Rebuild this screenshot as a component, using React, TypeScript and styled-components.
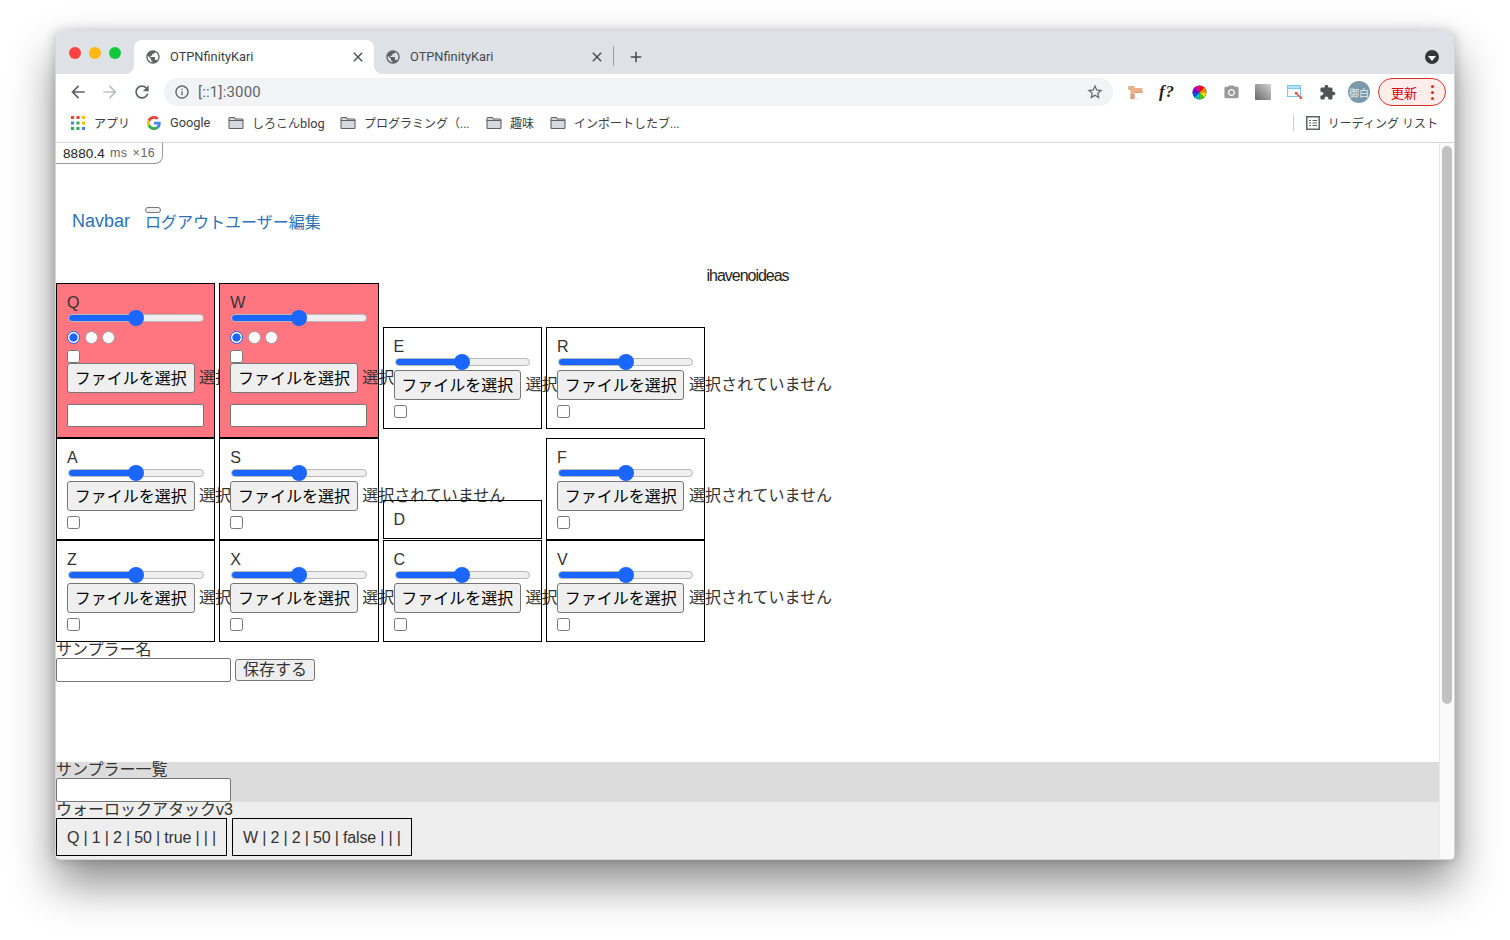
import React from 'react'
import styled, { createGlobalStyle } from 'styled-components'

const UI_FONT = `Roboto, "Noto Sans CJK JP", sans-serif`
const PAGE_FONT = `"Liberation Sans", "Noto Sans CJK JP", sans-serif`

const GlobalStyle = createGlobalStyle`
    html, body {
        margin : 0;
        padding : 0;
        background : #ffffff;
        overflow : hidden;
    }
`

// ---- icons ----

const ICONS: { [key: string]: string } = {
    back: 'M20 11H7.83l5.59-5.59L12 4l-8 8 8 8 1.41-1.41L7.83 13H20v-2z',
    forward: 'M12 4l-1.41 1.41L16.17 11H4v2h12.17l-5.58 5.59L12 20l8-8z',
    reload: 'M17.65 6.35C16.2 4.9 14.21 4 12 4c-4.42 0-7.99 3.58-7.99 8s3.57 8 7.99 8c3.73 0 6.84-2.55 7.73-6h-2.08c-.82 2.33-3.04 4-5.65 4-3.31 0-6-2.69-6-6s2.69-6 6-6c1.66 0 3.14.69 4.22 1.78L13 11h7V4l-2.35 2.35z',
    info: 'M11 7h2v2h-2zm0 4h2v6h-2zm1-9C6.48 2 2 6.48 2 12s4.48 10 10 10 10-4.48 10-10S17.52 2 12 2zm0 18c-4.41 0-8-3.59-8-8s3.59-8 8-8 8 3.59 8 8-3.59 8-8 8z',
    star: 'M22 9.24l-7.19-.62L12 2 9.19 8.63 2 9.24l5.46 4.73L5.82 21 12 17.27 18.18 21l-1.63-7.03L22 9.24zM12 15.4l-3.76 2.27 1-4.28-3.32-2.88 4.38-.38L12 6.1l1.71 4.04 4.38.38-3.32 2.88 1 4.28L12 15.4z',
    globe: 'M12 2C6.48 2 2 6.48 2 12s4.48 10 10 10 10-4.48 10-10S17.52 2 12 2zm-1 17.93c-3.95-.49-7-3.85-7-7.93 0-.62.08-1.21.21-1.79L9 15v1c0 1.1.9 2 2 2v1.93zm6.9-2.54c-.26-.81-1-1.39-1.9-1.39h-1v-3c0-.55-.45-1-1-1H8v-2h2c.55 0 1-.45 1-1V7h2c1.1 0 2-.9 2-2v-.41c2.93 1.19 5 4.06 5 7.41 0 2.08-.8 3.97-2.1 5.39z',
    puzzle: 'M20.5 11H19V7c0-1.1-.9-2-2-2h-4V3.5C13 2.12 11.88 1 10.5 1S8 2.12 8 3.5V5H4c-1.1 0-1.99.9-1.99 2v3.8H3.5c1.49 0 2.7 1.21 2.7 2.7s-1.21 2.7-2.7 2.7H2V20c0 1.1.9 2 2 2h3.8v-1.5c0-1.49 1.21-2.7 2.7-2.7 1.49 0 2.7 1.21 2.7 2.7V22H17c1.1 0 2-.9 2-2v-4h1.5c1.38 0 2.5-1.12 2.5-2.5S21.88 11 20.5 11z',
    camera: 'M9 2L7.17 4H4c-1.1 0-2 .9-2 2v12c0 1.1.9 2 2 2h16c1.1 0 2-.9 2-2V6c0-1.1-.9-2-2-2h-3.17L15 2H9zm3 15c-2.76 0-5-2.24-5-5s2.24-5 5-5 5 2.24 5 5-2.24 5-5 5zm0-8.2a3.2 3.2 0 1 0 0 6.4 3.2 3.2 0 0 0 0-6.4z',
    close: 'M19 6.41L17.59 5 12 10.59 6.41 5 5 6.41 10.59 12 5 17.59 6.41 19 12 13.41 17.59 19 19 17.59 13.41 12z',
    plus: 'M19 13h-6v6h-2v-6H5v-2h6V5h2v6h6v2z',
}

const Icon = ({ name, size, color }: { name: string, size: number, color: string }) => (
    <svg width={size} height={size} viewBox='0 0 24 24' fill={color} style={{ flexShrink: 0 }}>
        <path d={ICONS[name]} />
    </svg>
)

const FolderIcon = () => (
    <svg width={16} height={14} viewBox='0 0 16 14'>
        <path d='M1 2.5C1 1.9 1.4 1.5 2 1.5h4l1.5 1.5H14c.6 0 1 .4 1 1v7.5c0 .6-.4 1-1 1H2c-.6 0-1-.4-1-1z' fill='#d6d8db' stroke='#5f6368' strokeWidth='1.1' />
        <path d='M1 4.5h14' stroke='#5f6368' strokeWidth='1' />
    </svg>
)

const AppsIcon = () => {
    const colors = ['#ea4335', '#ea4335', '#fbbc04', '#4285f4', '#34a853', '#fbbc04', '#34a853', '#34a853', '#4285f4']
    return (
        <svg width={14} height={14} viewBox='0 0 14 14'>
            {colors.map((c, i) => <rect key={i} x={(i % 3) * 5.5} y={Math.floor(i / 3) * 5.5} width={3} height={3} fill={c} />)}
        </svg>
    )
}

const GoogleIcon = () => (
    <svg width={14} height={14} viewBox='0 0 48 48'>
        <path fill='#EA4335' d='M24 9.5c3.54 0 6.71 1.22 9.21 3.6l6.85-6.85C35.9 2.38 30.47 0 24 0 14.62 0 6.51 5.38 2.56 13.22l7.98 6.19C12.43 13.72 17.74 9.5 24 9.5z' />
        <path fill='#4285F4' d='M46.98 24.55c0-1.57-.15-3.09-.38-4.55H24v9.02h12.94c-.58 2.96-2.26 5.48-4.78 7.18l7.73 6c4.51-4.18 7.09-10.36 7.09-17.65z' />
        <path fill='#FBBC05' d='M10.53 28.59c-.48-1.45-.76-2.99-.76-4.59s.27-3.14.76-4.59l-7.98-6.19C.92 16.46 0 20.12 0 24c0 3.88.92 7.54 2.56 10.78l7.97-6.19z' />
        <path fill='#34A853' d='M24 48c6.48 0 11.93-2.13 15.89-5.81l-7.73-6c-2.15 1.45-4.92 2.3-8.16 2.3-6.26 0-11.57-4.22-13.47-9.91l-7.98 6.19C6.51 42.62 14.62 48 24 48z' />
    </svg>
)

const WoodIcon = () => (
    <svg width={16} height={16} viewBox='0 0 16 16'>
        <path d='M3 14.5h9v1H3z' fill='#ececec' />
        <path d='M1 3q0-1 1-1h5l1 2h7.5v5H7.5v6h-4V6H2q-1 0-1-1z' fill='#e9b48d' />
        <path d='M3.5 10h4v5h-4zM8 7.5h7.5V9H8z' fill='#d7a078' />
    </svg>
)

const ColorWheelIcon = () => {
    const colors = ['#ff0000', '#ff8a00', '#ffe600', '#3ecf00', '#00c8c8', '#0050ff', '#7a00e0', '#e000a0']
    const slices = colors.map((c, i) => {
        const a1 = (i / 8) * Math.PI * 2
        const a2 = ((i + 1) / 8) * Math.PI * 2
        return <path key={c} d={`M8 8L${8 + 7.5 * Math.sin(a1)} ${8 - 7.5 * Math.cos(a1)}L${8 + 7.5 * Math.sin(a2)} ${8 - 7.5 * Math.cos(a2)}Z`} fill={c} />
    })
    return (
        <svg width={15} height={15} viewBox='0 0 16 16'>
            <circle cx={8} cy={8} r={7.5} fill='#444' />
            {slices}
        </svg>
    )
}

const WindowArrowIcon = () => (
    <svg width={16} height={16} viewBox='0 0 16 16'>
        <rect x={0.5} y={1.5} width={13} height={11} fill='#f4fafe' stroke='#7cc4f2' />
        <rect x={0.5} y={1.5} width={13} height={3} fill='#b8e0f8' stroke='#7cc4f2' />
        <path d='M9 9l5 5' stroke='#f0503c' strokeWidth='1.6' />
        <path d='M8 8h3l-3 3zM15 15h-3l3-3z' fill='#f0503c' />
    </svg>
)

const ReadingListIcon = () => (
    <svg width={14} height={14} viewBox='0 0 14 14' fill='none' stroke='#5f6368'>
        <rect x={0.75} y={0.75} width={12.5} height={12.5} strokeWidth='1.5' />
        <path d='M3 4.5h2M6.5 4.5h4.5M3 7h2M6.5 7h4.5M3 9.5h2M6.5 9.5h4.5' strokeWidth='1.2' />
    </svg>
)

// ---- browser chrome ----

const Canvas = styled.div`
    width : 1510px;
    height : 940px;
    box-sizing : border-box;
    padding : 31px 55px 80px;
    background : #ffffff;
`

const Window = styled.div`
    height : 829px;
    display : flex;
    flex-direction : column;
    box-sizing : border-box;
    border : 1px solid rgba(0, 0, 0, .16);
    border-top : 0;
    border-radius : 7px 7px 5px 5px;
    overflow : hidden;
    background : #ffffff;
    box-shadow : 0 24px 46px rgba(0, 0, 0, .45), 0 0 12px rgba(0, 0, 0, .2);
`

const TabBar = styled.div`
    height : 43px;
    flex-shrink : 0;
    display : flex;
    align-items : flex-end;
    background : #dee1e6;
    padding-right : 15px;
`

const TrafficLights = styled.div`
    width : 78px;
    height : 100%;
    flex-shrink : 0;
    display : flex;
    gap : 8px;
    padding : 16px 0 0 13px;
    box-sizing : border-box;
`

const Light = styled.div<{ $color: string }>`
    width : 12px;
    height : 12px;
    border-radius : 50%;
    background : ${(props) => props.$color};
`

const Tab = styled.div<{ $active?: boolean }>`
    position : relative;
    width : ${(props) => props.$active ? 240 : 239}px;
    height : 34px;
    box-sizing : border-box;
    display : flex;
    align-items : center;
    gap : 9px;
    padding : 0 8px 1px 11px;
    border-radius : 8px 8px 0 0;
    background : ${(props) => props.$active ? '#ffffff' : 'transparent'};
    font : 12.8px ${UI_FONT};
    color : ${(props) => props.$active ? '#3c4043' : '#45494d'};

    span {
        flex-grow : 1;
    }

    ${(props) => props.$active && `
        &::before, &::after {
            content : '';
            position : absolute;
            bottom : 0;
            width : 8px;
            height : 8px;
        }
        &::before {
            left : -8px;
            background : radial-gradient(circle at 0 0, #dee1e6 7.5px, #ffffff 8px);
        }
        &::after {
            right : -8px;
            background : radial-gradient(circle at 100% 0, #dee1e6 7.5px, #ffffff 8px);
        }
    `}
`

const TabDivider = styled.div`
    width : 1px;
    height : 20px;
    background : #9aa0a6;
    margin-bottom : 8px;
`

const NewTab = styled.div`
    width : 44px;
    height : 34px;
    display : flex;
    align-items : center;
    justify-content : center;
`

const TabBarSpacer = styled.div`
    flex-grow : 1;
`

const TabMenu = styled.div`
    width : 14px;
    height : 14px;
    margin-bottom : 10px;
    border-radius : 50%;
    background : #35383b;
    display : flex;
    align-items : center;
    justify-content : center;

    &::after {
        content : '';
        margin-top : 2px;
        border-left : 4px solid transparent;
        border-right : 4px solid transparent;
        border-top : 5px solid #ffffff;
    }
`

const Toolbar = styled.div`
    height : 36px;
    flex-shrink : 0;
    display : flex;
    align-items : center;
    padding-left : 12px;
    background : #ffffff;
`

const NavButtons = styled.div`
    display : flex;
    align-items : center;
    gap : 12px;
    margin-right : 12px;
`

const Omnibox = styled.div`
    width : 949px;
    height : 28px;
    box-sizing : border-box;
    display : flex;
    align-items : center;
    padding : 0 9px 0 10px;
    gap : 8px;
    border-radius : 14px;
    background : #f1f3f4;
    font : 15px ${UI_FONT};
    letter-spacing : .2px;
    color : #5f6368;

    span {
        flex-grow : 1;
    }
`

const Extensions = styled.div`
    display : flex;
    align-items : center;
    margin-left : 6px;
`

const ExtSlot = styled.div`
    width : 32px;
    height : 28px;
    display : flex;
    align-items : center;
    justify-content : center;
    flex-shrink : 0;
`

const FormulaMark = styled.span`
    font : italic bold 17px "Liberation Serif", serif;
    letter-spacing : 1px;
    color : #222222;
`

const GradientSquare = styled.div`
    width : 16px;
    height : 16px;
    border-radius : 1px;
    background : linear-gradient(45deg, #666666, #d4d4d4);
`

const Avatar = styled.div`
    width : 22px;
    height : 22px;
    border-radius : 50%;
    background : #7a99a8;
    color : #e8eef0;
    font : 10px "Noto Sans CJK JP", sans-serif;
    display : flex;
    align-items : center;
    justify-content : center;
`

const UpdatePill = styled.div`
    width : 68px;
    height : 28px;
    margin-left : 3px;
    box-sizing : border-box;
    display : flex;
    align-items : center;
    justify-content : space-between;
    padding : 0 11px 0 12px;
    border : 1px solid #d93025;
    border-radius : 14px;
    background : #fdeeec;
    color : #d6000f;
    font : 13px "Noto Sans CJK JP", sans-serif;
`

const PillDots = styled.div`
    display : flex;
    flex-direction : column;
    gap : 3px;

    i {
        width : 3px;
        height : 3px;
        border-radius : 50%;
        background : #d93025;
    }
`

const BookmarkBar = styled.div`
    height : 33px;
    flex-shrink : 0;
    box-sizing : border-box;
    display : flex;
    align-items : center;
    padding : 0 16px 7px 15px;
    border-bottom : 1px solid #d4d6d9;
    font : 12px ${UI_FONT};
    color : #3c4043;
`

const Bookmark = styled.div<{ $width: number, $gap?: number }>`
    width : ${(props) => props.$width}px;
    flex-shrink : 0;
    display : flex;
    align-items : center;
    gap : ${(props) => props.$gap || 8}px;
    white-space : nowrap;

    small {
        font-size : 12.8px;
    }
`

const BookmarkSpacer = styled.div`
    flex-grow : 1;
`

const ReadingList = styled.div`
    display : flex;
    align-items : center;
    height : 16px;
    padding-left : 12px;
    gap : 8px;
    border-left : 1px solid #c8cacd;
    white-space : nowrap;
`

// ---- page ----

const Viewport = styled.div`
    flex-grow : 1;
    min-height : 0;
    display : flex;
`

const Page = styled.div`
    flex-grow : 1;
    min-width : 0;
    display : flex;
    flex-direction : column;
    font : 16px/16px ${PAGE_FONT};
    color : #333333;
    background : #ffffff;
`

const Scrollbar = styled.div`
    width : 15px;
    flex-shrink : 0;
    box-sizing : border-box;
    padding : 3px 2px 0 2px;
    background : #fafafa;
    border-left : 1px solid #e8e8e8;

    div {
        height : 558px;
        border-radius : 5px;
        background : #c1c1c1;
    }
`

const PerfBadge = styled.div`
    align-self : flex-start;
    height : 21px;
    width : 107px;
    box-sizing : border-box;
    display : flex;
    align-items : center;
    padding-left : 7px;
    gap : 5px;
    border : 1px solid #999999;
    border-width : 0 1px 1px 0;
    border-radius : 0 0 8px 0;
    font : 13.5px ${PAGE_FONT};
    letter-spacing : .1px;
    color : #222222;

    small {
        font-size : 12.5px;
        letter-spacing : .5px;
        color : #666666;
    }
`

const Navbar = styled.nav`
    display : flex;
    align-items : flex-start;
    margin-top : 43px;
    padding-left : 16px;
    height : 29px;
`

const NavBrand = styled.a`
    font-size : 18px;
    line-height : 28px;
    color : #2a72b5;
    margin-right : 15px;
`

const NavLinks = styled.div`
    position : relative;
    padding-top : 4px;
    font-size : 16px;
    line-height : 24px;
    color : #2a72b5;
`

const NavToggler = styled.button`
    position : absolute;
    left : 0;
    top : 0;
    width : 16px;
    height : 6px;
    padding : 0;
    box-sizing : border-box;
    background : #efefef;
    border : 1px solid #767676;
    border-radius : 3px;
`

const Title = styled.div`
    margin-top : 28px;
    height : 19px;
    text-align : center;
    line-height : 24px;
    letter-spacing : -1.05px;
    word-spacing : -3.3px;
    color : #222222;
`

const KeyRow = styled.div`
    display : flex;
    align-items : flex-end;
    gap : 4px;
`

const KeyCell = styled.div<{ $active?: boolean, $drop?: number }>`
    width : 159.3px;
    flex-shrink : 0;
    box-sizing : border-box;
    display : flex;
    flex-direction : column;
    align-items : flex-start;
    padding : 10px;
    border : 1px solid #000000;
    margin-bottom : ${(props) => props.$drop || 0}px;
    background : ${(props) => props.$active ? '#ff7580' : 'transparent'};
`

const KeyName = styled.div`
    height : 16px;
    line-height : 17px;
`

const VolumeSlider = styled.input`
    appearance : none;
    display : block;
    width : 135.5px;
    height : 16px;
    margin : 0 0 0 1px;
    background : transparent;

    &::-webkit-slider-runnable-track {
        height : 8px;
        box-sizing : border-box;
        border-radius : 4px;
        border : 1px solid #b8b8b8;
        background : linear-gradient(to right, #1a66ff 50%, #efefef 50%);
    }

    &::-webkit-slider-thumb {
        appearance : none;
        width : 16px;
        height : 16px;
        margin-top : -5px;
        border-radius : 50%;
        background : #1a66ff;
    }
`

const RadioRow = styled.div`
    display : flex;
    gap : 4.5px;
    margin : 5px 0 1px;
    height : 13px;
`

const Radio = styled.input`
    appearance : none;
    width : 13px;
    height : 13px;
    margin : 0;
    box-sizing : border-box;
    border-radius : 50%;
    border : 1px solid #a0a0a0;
    background : #ffffff;

    &:checked {
        border-color : #1a66ff;
        background : radial-gradient(circle, #1a66ff 0, #1a66ff 3.8px, #ffffff 4.4px);
    }
`

const Check = styled.input`
    display : block;
    width : 13px;
    height : 13px;
    margin : 5px 0 0 0;
`

const FileRow = styled.div`
    display : flex;
    align-items : center;
    white-space : nowrap;
    width : 100%;
`

const FileButton = styled.button`
    height : 30px;
    width : 127.5px;
    flex-shrink : 0;
    box-sizing : border-box;
    padding : 0 0 2px;
    margin-right : 4.5px;
    background : #efefef;
    border : 1px solid #767676;
    border-radius : 3px;
    font : 16px ${PAGE_FONT};
    color : #000000;
`

const FileLabel = styled.span`
    color : #333333;
`

const SampleInput = styled.input`
    display : block;
    width : 137px;
    height : 23px;
    box-sizing : border-box;
    margin : 11px 0 0 0;
    padding : 1px 2px;
    background : #ffffff;
    border : 1px solid #767676;
    border-radius : 2px;
`

const EmptyCell = styled.div`
    width : 159.3px;
    height : 39px;
    flex-shrink : 0;
    box-sizing : border-box;
    padding : 10px;
    margin-bottom : 1px;
    border : 1px solid #000000;
`

const SaveLabel = styled.div`
    height : 16px;
    margin-top : 0;
`

const SaveRow = styled.div`
    display : flex;
    align-items : center;
    gap : 4px;
    height : 24px;
`

const NameInput = styled.input`
    display : block;
    width : 175px;
    height : 24px;
    box-sizing : border-box;
    margin : 0;
    background : #ffffff;
    border : 1px solid #767676;
    border-radius : 2px;
`

const SaveButton = styled.button`
    width : 80px;
    height : 22px;
    box-sizing : border-box;
    padding : 0;
    background : #efefef;
    border : 1px solid #767676;
    border-radius : 3px;
    font : 16px/18px ${PAGE_FONT};
    color : #333333;
`

const ListHeader = styled.div`
    margin-top : 80px;
    height : 40px;
    background : #dcdcdc;
`

const ListBody = styled.div`
    flex-grow : 1;
    background : #eeeeee;
`

const PresetRow = styled.div`
    display : flex;
    gap : 5px;
`

const PresetCard = styled.div`
    height : 38px;
    box-sizing : border-box;
    padding : 0 10px;
    border : 1px solid #000000;
    line-height : 37px;
    letter-spacing : -.17px;
    white-space : nowrap;
`

interface KeyData {
    name: string
    active?: boolean
    drop?: number
}

const KeyBox = ({ name, active, drop }: KeyData) => (
    <KeyCell $active={active} $drop={drop}>
        <KeyName>{name}</KeyName>
        <VolumeSlider type='range' defaultValue={50} readOnly />
        {active && (
            <RadioRow>
                <Radio type='radio' name={`mode_${name}`} defaultChecked />
                <Radio type='radio' name={`mode_${name}`} />
                <Radio type='radio' name={`mode_${name}`} />
            </RadioRow>
        )}
        {active && <Check type='checkbox' />}
        <FileRow>
            <FileButton>ファイルを選択</FileButton>
            <FileLabel>選択されていません</FileLabel>
        </FileRow>
        {active ? <SampleInput /> : <Check type='checkbox' />}
    </KeyCell>
)

const App = () => {
    return (
        <Canvas>
            <GlobalStyle />
            <Window>
                <TabBar>
                    <TrafficLights>
                        <Light $color='#ff4343' />
                        <Light $color='#ffb80f' />
                        <Light $color='#12c93e' />
                    </TrafficLights>
                    <Tab $active>
                        <Icon name='globe' size={16} color='#5f6368' />
                        <span>OTPNfinityKari</span>
                        <Icon name='close' size={16} color='#45494d' />
                    </Tab>
                    <Tab>
                        <Icon name='globe' size={16} color='#5f6368' />
                        <span>OTPNfinityKari</span>
                        <Icon name='close' size={16} color='#45494d' />
                    </Tab>
                    <TabDivider />
                    <NewTab>
                        <Icon name='plus' size={18} color='#45494d' />
                    </NewTab>
                    <TabBarSpacer />
                    <TabMenu />
                </TabBar>

                <Toolbar>
                    <NavButtons>
                        <Icon name='back' size={20} color='#5f6368' />
                        <Icon name='forward' size={20} color='#bdc1c6' />
                        <Icon name='reload' size={20} color='#5f6368' />
                    </NavButtons>
                    <Omnibox>
                        <Icon name='info' size={16} color='#5f6368' />
                        <span>[::1]:3000</span>
                        <Icon name='star' size={18} color='#5f6368' />
                    </Omnibox>
                    <Extensions>
                        <ExtSlot><WoodIcon /></ExtSlot>
                        <ExtSlot><FormulaMark>f?</FormulaMark></ExtSlot>
                        <ExtSlot><ColorWheelIcon /></ExtSlot>
                        <ExtSlot><Icon name='camera' size={17} color='#9a9a9a' /></ExtSlot>
                        <ExtSlot><GradientSquare /></ExtSlot>
                        <ExtSlot><WindowArrowIcon /></ExtSlot>
                        <ExtSlot><Icon name='puzzle' size={17} color='#505356' /></ExtSlot>
                        <ExtSlot><Avatar>御白</Avatar></ExtSlot>
                        <UpdatePill>
                            更新
                            <PillDots><i /><i /><i /></PillDots>
                        </UpdatePill>
                    </Extensions>
                </Toolbar>

                <BookmarkBar>
                    <Bookmark $width={76} $gap={9}><AppsIcon />アプリ</Bookmark>
                    <Bookmark $width={81} $gap={9}><GoogleIcon /><small>Google</small></Bookmark>
                    <Bookmark $width={112}><FolderIcon /><span>しろこん<small>blog</small></span></Bookmark>
                    <Bookmark $width={146}><FolderIcon />プログラミング（...</Bookmark>
                    <Bookmark $width={64}><FolderIcon />趣味</Bookmark>
                    <Bookmark $width={140}><FolderIcon />インポートしたブ...</Bookmark>
                    <BookmarkSpacer />
                    <ReadingList><ReadingListIcon />リーディング リスト</ReadingList>
                </BookmarkBar>

                <Viewport>
                    <Page>
                        <PerfBadge>8880.4 <small>ms</small> <small>×16</small></PerfBadge>
                        <Navbar>
                            <NavBrand>Navbar</NavBrand>
                            <NavLinks>
                                <NavToggler />
                                ログアウトユーザー編集
                            </NavLinks>
                        </Navbar>
                        <Title>i have no ideas</Title>
                        <KeyRow>
                            <KeyBox name='Q' active />
                            <KeyBox name='W' active />
                            <KeyBox name='E' drop={9} />
                            <KeyBox name='R' drop={9} />
                        </KeyRow>
                        <KeyRow>
                            <KeyBox name='A' />
                            <KeyBox name='S' />
                            <EmptyCell><KeyName>D</KeyName></EmptyCell>
                            <KeyBox name='F' />
                        </KeyRow>
                        <KeyRow>
                            <KeyBox name='Z' />
                            <KeyBox name='X' />
                            <KeyBox name='C' />
                            <KeyBox name='V' />
                        </KeyRow>
                        <SaveLabel>サンプラー名</SaveLabel>
                        <SaveRow>
                            <NameInput />
                            <SaveButton>保存する</SaveButton>
                        </SaveRow>
                        <ListHeader>
                            <SaveLabel>サンプラー一覧</SaveLabel>
                            <NameInput />
                        </ListHeader>
                        <ListBody>
                            <SaveLabel>ウォーロックアタックv3</SaveLabel>
                            <PresetRow>
                                <PresetCard>Q | 1 | 2 | 50 | true | | |</PresetCard>
                                <PresetCard>W | 2 | 2 | 50 | false | | |</PresetCard>
                            </PresetRow>
                        </ListBody>
                    </Page>
                    <Scrollbar><div /></Scrollbar>
                </Viewport>
            </Window>
        </Canvas>
    )
}

export default App
